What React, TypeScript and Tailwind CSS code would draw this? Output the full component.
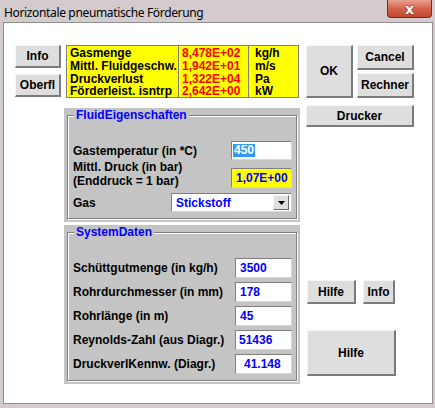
import React from "react";

const F = "font-['Liberation_Sans',Arial,sans-serif] font-bold text-[12px]";

function Btn({ className, children }: { className: string; children: React.ReactNode }) {
  return (
    <div
      className={`flex items-center justify-center bg-[#dedede] border-t border-l border-t-[#f6f6f6] border-l-[#f6f6f6] border-r-2 border-b-2 border-r-[#7a7a7a] border-b-[#7a7a7a] text-black leading-none ${F} ${className}`}
    >
      {children}
    </div>
  );
}

function Field({ className, children }: { className: string; children: React.ReactNode }) {
  return (
    <div
      className={`flex items-center border-t border-l border-t-[#808080] border-l-[#808080] border-r border-b border-r-[#d8d8d8] border-b-[#d8d8d8] text-[#0000ff] leading-none ${F} ${className}`}
    >
      {children}
    </div>
  );
}

function Group({ title, className, children }: { title: string; className: string; children: React.ReactNode }) {
  return (
    <div className={`bg-[#c4c4c4] px-[3px] pt-[7px] pb-[3px] ${className}`}>
      <div className="relative h-full border border-[#808080] shadow-[inset_1px_1px_0_#ffffff,1px_1px_0_#ffffff]">
        <div className={`absolute left-[6px] top-[-8px] bg-[#c4c4c4] px-[2px] text-[#0000ff] leading-[14px] ${F}`}>
          {title}
        </div>
        {children}
      </div>
    </div>
  );
}

export default function App() {
  return (
    <div className="w-[435px] h-[408px] bg-[#d3cbce] flex flex-col overflow-hidden">
      {/* title bar */}
      <div className="h-[22px] flex items-start justify-between">
        <div className="pl-[4px] pt-[5px] text-[12px] leading-[16px] tracking-[-0.35px] text-black font-['Noto_Sans',sans-serif]">
          Horizontale pneumatische Förderung
        </div>
        <div className="mr-[3px] w-[45px] h-[18px] rounded-b-[4px] border border-t-0 border-[#7a2a1e] bg-gradient-to-b from-[#e9a08e] via-[#d5634c] to-[#c2472f] flex items-center justify-center">
          <span className="text-white font-['DejaVu_Sans',sans-serif] font-bold text-[14px] leading-none [text-shadow:0_0_2px_#5a1a10]">
            x
          </span>
        </div>
      </div>

      {/* client */}
      <div className="ml-[3px] w-[430px] h-[382px] bg-white border border-[#8e8e8e] flex pl-[11px] pt-[22px]">
        {/* left column */}
        <div className="w-[46px] flex flex-col gap-[6px]">
          <Btn className="h-[23px] w-[46px]">Info</Btn>
          <Btn className="h-[23px] w-[46px]">Oberfl</Btn>
        </div>

        {/* middle column */}
        <div className="ml-[3px] w-[236px] flex flex-col">
          <div className={`ml-[2px] w-[233px] h-[53px] bg-[#ffff00] border border-[#808080] flex ${F}`}>
            <div className="w-[112px] border-r border-[#808080] pl-[3px] pt-[1px] text-black leading-[12.75px]">
              <div>Gasmenge</div>
              <div>Mittl. Fluidgeschw.</div>
              <div>Druckverlust</div>
              <div>Förderleist. isntrp</div>
            </div>
            <div className="w-[70px] border-r border-[#808080] pl-[3px] pt-[1px] text-[#ff0000] leading-[12.75px]">
              <div>8,478E+02</div>
              <div>1,942E+01</div>
              <div>1,322E+04</div>
              <div>2,642E+00</div>
            </div>
            <div className="flex-1 pl-[6px] pt-[1px] text-black leading-[12.75px]">
              <div>kg/h</div>
              <div>m/s</div>
              <div>Pa</div>
              <div>kW</div>
            </div>
          </div>

          <Group title="FluidEigenschaften" className="mt-[10px] h-[114px]">
            <div className={`pl-[5px] pr-[4px] pt-[25px] text-black ${F}`}>
              <div className="h-[19px] flex items-center justify-between">
                <span>Gastemperatur (in *C)</span>
                <Field className="w-[61px] h-[19px] bg-white pl-[1px]">
                  <span className="bg-[#3399ff] text-white px-[1px] leading-[13px]">450</span>
                </Field>
              </div>
              <div className="mt-[8px] h-[20px] flex items-center justify-between">
                <div className="leading-[14px] mb-[8px]">
                  <div>Mittl. Druck (in bar)</div>
                  <div>(Enddruck = 1 bar)</div>
                </div>
                <Field className="w-[61px] h-[20px] bg-[#ffff00] pl-[4px]">1,07E+00</Field>
              </div>
              <div className="mt-[5px] h-[19px] flex items-center justify-between">
                <span>Gas</span>
                <Field className="w-[121px] h-[19px] bg-white pl-[4px] pr-[2px] justify-between">
                  <span>Stickstoff</span>
                  <div className="w-[16px] h-[15px] bg-[#dedede] border-t border-l border-t-[#f6f6f6] border-l-[#f6f6f6] border-r border-b border-r-[#6a6a6a] border-b-[#6a6a6a] flex items-center justify-center">
                    <svg width="7" height="4" viewBox="0 0 7 4">
                      <polygon points="0,0 7,0 3.5,4" fill="#000" />
                    </svg>
                  </div>
                </Field>
              </div>
            </div>
          </Group>

          <Group title="SystemDaten" className="mt-[3px] h-[159px]">
            <div className={`pl-[5px] pr-[4px] pt-[25px] text-black flex flex-col gap-[4px] ${F}`}>
              {[
                ["Schüttgutmenge (in kg/h)", "3500", "pl-[4px]"],
                ["Rohrdurchmesser (in mm)", "178", "pl-[4px]"],
                ["Rohrlänge (in m)", "45", "pl-[4px]"],
                ["Reynolds-Zahl (aus Diagr.)", "51436", "pl-[3px]"],
                ["DruckverlKennw. (Diagr.)", "41.148", "pl-[8px]"],
              ].map(([l, v, p]) => (
                <div key={l} className="h-[20px] flex items-center justify-between">
                  <span>{l}</span>
                  <Field className={`w-[57px] h-[20px] bg-white ${p}`}>{v}</Field>
                </div>
              ))}
            </div>
          </Group>
        </div>

        {/* right column */}
        <div className="ml-[6px] w-[108px] flex flex-col">
          <div className="flex gap-[4px]">
            <Btn className="w-[47px] h-[53px]">OK</Btn>
            <div className="flex flex-col gap-[3px]">
              <Btn className="w-[57px] h-[25px]">Cancel</Btn>
              <Btn className="w-[57px] h-[25px]">Rechner</Btn>
            </div>
          </div>
          <Btn className="mt-[7px] w-[108px] h-[22px]">Drucker</Btn>
          <div className="mt-[153px] ml-[1px] flex gap-[7px]">
            <Btn className="w-[49px] h-[24px]">Hilfe</Btn>
            <Btn className="w-[32px] h-[24px]">Info</Btn>
          </div>
          <Btn className="mt-[26px] ml-[1px] w-[89px] h-[46px]">Hilfe</Btn>
        </div>
      </div>
    </div>
  );
}
